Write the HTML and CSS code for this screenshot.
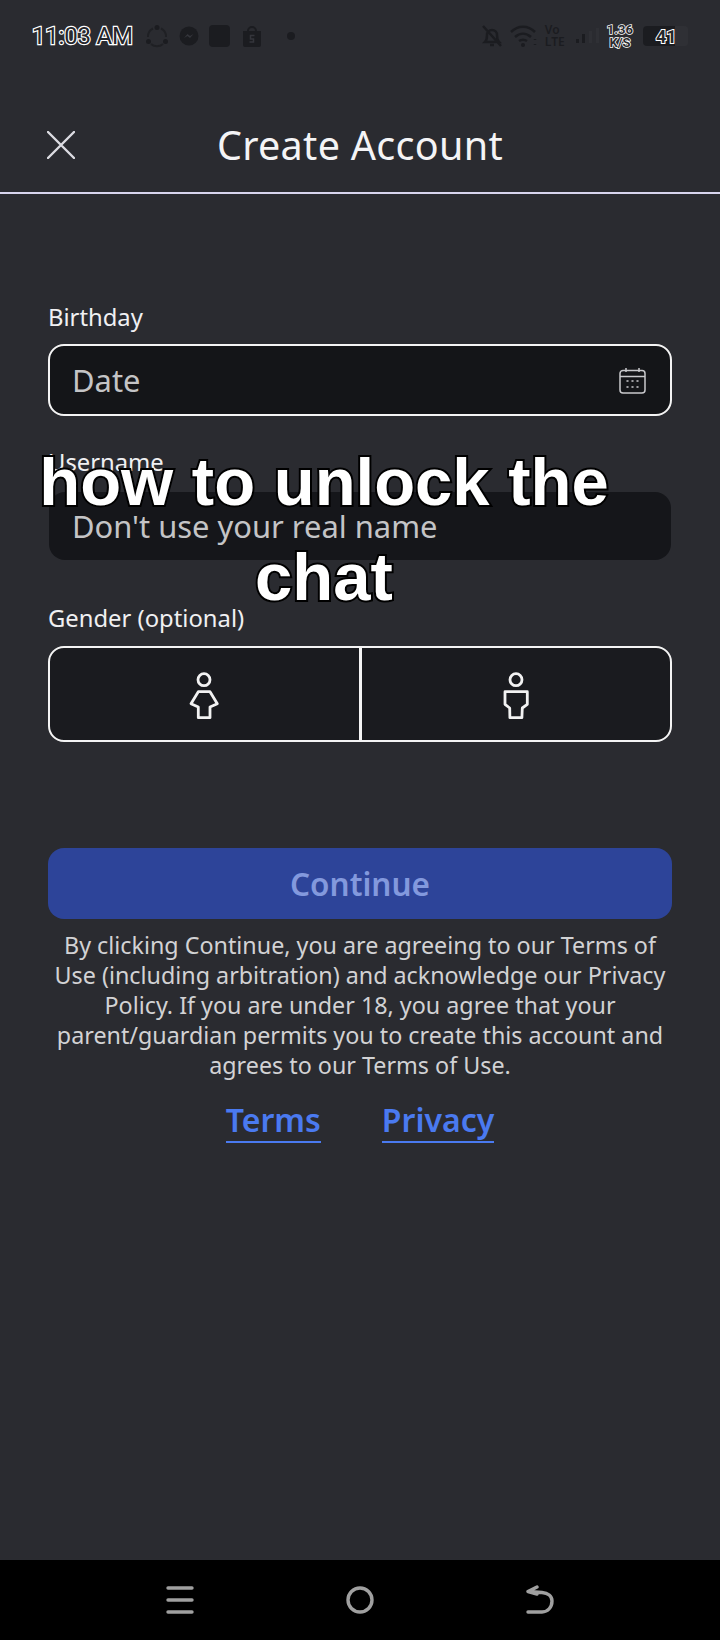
FILE: index.html
```html
<!DOCTYPE html>
<html lang="en">
<head>
<meta charset="utf-8">
<title>Create Account</title>
<link rel="stylesheet" href="styles.css">
</head>
<body>
<div class="app">
  <div class="status">
    <div class="status-left">
      <span class="time">11:03 AM</span>
      <svg class="si" width="24" height="24" viewBox="0 0 24 24" fill="none" stroke="#1f2024" stroke-width="2"><path d="M8 4.500A9 9 0 0 0 3 13M21 13a9 9 0 0 0-5-8.500M6 20a9 9 0 0 0 12 0"/><circle cx="12" cy="3.500" r="2.500" fill="#1b1c20" stroke="none"/><circle cx="3.500" cy="17.500" r="2.500" fill="#1b1c20" stroke="none"/><circle cx="20.500" cy="17.500" r="2.500" fill="#1b1c20" stroke="none"/></svg>
      <svg class="si" width="20" height="20" viewBox="0 0 20 20"><circle cx="10" cy="10" r="9.500" fill="#1b1c20"/><path d="M5 12l3.500-4 2.500 2 3.500-2-3.500 4-2.500-2z" fill="#34353b"/></svg>
      <span class="app-square"></span>
      <svg class="si" width="18" height="22" viewBox="0 0 18 22"><path d="M0 6h18v14a2 2 0 0 1-2 2H2a2 2 0 0 1-2-2z" fill="#1b1c20"/><path d="M5 6a4 4 0 0 1 8 0" fill="none" stroke="#1b1c20" stroke-width="2"/><path d="M11.500 10.500H7.500v3.500h3v3h-4" fill="none" stroke="#34353b" stroke-width="1.500"/></svg>
      <span class="dot"></span>
    </div>
    <div class="status-right">
      <svg width="22" height="24" viewBox="0 0 22 24" fill="none" stroke="#1b1c20" stroke-width="2.500"><path d="M4 18c2-2 2-4 2-7a5 5 0 0 1 10 0c0 3 0 5 2 7zM9 21h4M2 2l18 20"/></svg>
      <svg width="28" height="22" viewBox="0 0 28 22" fill="none" stroke="#1b1c20" stroke-width="2.500"><path d="M1 7c7-7 17-7 24 0M5 12c5-4.500 11-4.500 16 0M9 16c3-2 5-2 8 0"/><circle cx="13" cy="20" r="2" fill="#1b1c20" stroke="none"/><path d="M25 14v1M25 19v1"/></svg>
      <span class="volte">Vo<br>LTE</span>
      <svg width="24" height="16" viewBox="0 0 24 16"><rect x="0" y="11" width="3" height="4" fill="#1b1c20"/><rect x="6" y="6" width="3" height="9" fill="#1b1c20"/><rect x="13" y="3" width="3" height="12" fill="#2f3035"/><rect x="20" y="0" width="3" height="15" fill="#2f3035"/></svg>
      <span class="speed">1.36<br>K/S</span>
      <div class="battery"><span class="battery-num">41</span></div>
    </div>
  </div>

  <header class="header">
    <svg class="close" width="28" height="28" viewBox="0 0 28 28" fill="none" stroke="#dcdce2" stroke-width="2.400" stroke-linecap="round"><path d="M1 1l26 26M27 1L1 27"/></svg>
    <h1 class="title">Create Account</h1>
  </header>

  <main class="main">
    <label class="label label-birthday">Birthday</label>
    <div class="field field-date">
      <span class="placeholder">Date</span>
      <svg width="27" height="27" viewBox="0 0 27 27" fill="none" stroke="#c9c9cc" stroke-width="1.500"><rect x="1" y="3.500" width="25" height="22.500" rx="3"/><path d="M1 9.500h25M7 1v4M20 1v4"/><path d="M8 14h1M13 14h1M18 14h1M8 20h1M13 20h1M18 20h1" stroke-linecap="round"/></svg>
    </div>

    <label class="label label-username">Username</label>
    <div class="field field-name">
      <span class="placeholder">Don't use your real name</span>
    </div>

    <label class="label label-gender">Gender (optional)</label>
    <div class="gender">
      <div class="gender-opt">
        <svg width="32" height="50" viewBox="0 0 32 50" fill="none" stroke="#f2f2f2" stroke-width="2.800" stroke-linejoin="round"><circle cx="16" cy="8.700" r="6"/><path d="M10.300 20.700H22L29.300 32.700 22 36V46.700H10.300V36L3 32.700z"/></svg>
      </div>
      <div class="gender-opt gender-opt-right">
        <svg width="32" height="50" viewBox="0 0 32 50" fill="none" stroke="#f2f2f2" stroke-width="2.800" stroke-linejoin="round"><circle cx="16" cy="8.700" r="6"/><path d="M5 20.700H27.300V33.300L22.300 37 21.900 46.700H9.900L9.700 37 5 33.300z"/></svg>
      </div>
    </div>

    <button class="continue" type="button">Continue</button>

    <p class="legal">By clicking Continue, you are agreeing to our Terms of Use (including arbitration) and acknowledge our Privacy Policy. If you are under 18, you agree that your parent/guardian permits you to create this account and agrees to our Terms of Use.</p>

    <div class="links">
      <a class="link">Terms</a>
      <a class="link">Privacy</a>
    </div>
  </main>

  <nav class="nav">
    <svg width="28" height="28" viewBox="0 0 28 28" stroke="#a0a0a0" stroke-width="3.400" stroke-linecap="round"><path d="M2 2h24M2 14h24M2 26h24"/></svg>
    <svg width="30" height="30" viewBox="0 0 30 30" fill="none" stroke="#a0a0a0" stroke-width="3.400"><circle cx="15" cy="15" r="12"/></svg>
    <svg width="30" height="30" viewBox="0 0 30 30" fill="none" stroke="#a0a0a0" stroke-width="3.400" stroke-linecap="round" stroke-linejoin="round"><path d="M12 2L3 6.500 12 9M3 6.500L17 7.500C23 8 27 11 27 16 27 22 23 27 17 27H3"/></svg>
  </nav>

  <div class="caption">how to unlock the<br>chat</div>
</div>
</body>
</html>
```

FILE: styles.css
```css
* { box-sizing: border-box; }
html, body { margin: 0; padding: 0; }
body { background: #2a2b30; font-family: "Noto Sans", sans-serif; }
.app { position: relative; width: 720px; height: 1640px; display: flex; flex-direction: column; background: #2a2b30; overflow: hidden; }

.status { height: 72px; padding: 0 32px; display: flex; justify-content: space-between; align-items: center; }
.status-left { display: flex; align-items: center; }
.time { font-family: "Roboto", sans-serif; font-size: 24px; letter-spacing: -0.2px; color: #26272b; -webkit-text-stroke: 2.400px #fff; paint-order: stroke fill; margin-right: 12px; }
.si { margin-right: 10px; flex: none; }
.app-square { width: 21px; height: 22px; border-radius: 4px; background: #1b1c20; margin-right: 13px; }
.dot { width: 8px; height: 8px; border-radius: 50%; background: #1b1c20; margin-left: 16px; }
.status-right { display: flex; align-items: center; gap: 7px; }
.volte { font-size: 12px; line-height: 12px; color: #1b1c20; font-weight: 600; width: 24px; }
.speed { font-family: "Roboto", sans-serif; font-size: 13px; line-height: 13px; font-weight: 700; color: #2a2b30; -webkit-text-stroke: 1.500px #fff; paint-order: stroke fill; text-align: center; }
.battery { width: 45px; height: 20px; margin-left: 3px; border-radius: 4px; background: linear-gradient(90deg, #1b1c20 72%, #2f3035 72%); display: flex; align-items: center; padding-left: 13px; }
.battery-num { font-family: "Roboto", sans-serif; font-size: 18px; font-weight: 700; color: #26272b; -webkit-text-stroke: 2px #fff; paint-order: stroke fill; }

.header { position: relative; height: 122px; border-bottom: 2px solid #d8d5ee; display: flex; align-items: center; justify-content: center; padding-top: 26px; }
.close { position: absolute; left: 47px; top: 59px; }
.title { margin: 0; font-size: 39.500px; font-weight: 400; color: #f4f4f6; letter-spacing: 0.3px; }

.main { flex: 1; padding: 107px 48px 0; display: flex; flex-direction: column; }
.label { font-size: 23.800px; line-height: 32px; color: #f0f0f2; }
.field { height: 72px; border-radius: 16px; background: #141518; display: flex; align-items: center; justify-content: space-between; padding: 0 24px; margin-top: 11px; }
.field-date { border: 2px solid #f4f4f4; padding: 0 24px 0 22px; }
.field-name { height: 68px; margin-top: 14px; margin-left: 1px; margin-right: 1px; padding-left: 23px; background: #15161a; }
.placeholder { font-size: 30.900px; color: #c4c4c6; }
.label-username { margin-top: 30px; }
.label-gender { margin-top: 42px; }
.gender { height: 96px; margin-top: 12px; border: 2px solid #f4f4f4; border-radius: 16px; background: #1a1b1f; display: flex; overflow: hidden; }
.gender-opt { flex: 1; display: flex; align-items: center; justify-content: center; padding-top: 3px; }
.gender-opt-right { border-left: 3px solid #f4f4f4; }

.continue { height: 71px; margin-top: 106px; border: 0; border-radius: 16px; background: #2d4499; color: #8399dd; font-family: inherit; font-size: 31.500px; font-weight: 600; }
.legal { margin: 11px -4px 0; font-size: 23.300px; line-height: 30px; color: #d2d2d4; text-align: center; }
.links { display: flex; justify-content: center; gap: 61px; margin-top: 19px; }
.link { font-size: 32px; font-weight: 600; line-height: 42px; color: #4a7af0; border-bottom: 2px solid #4a7af0; }

.nav { height: 80px; background: #000; display: grid; grid-template-columns: repeat(3, 180px); justify-content: center; justify-items: center; align-items: center; }

.caption { position: absolute; left: 0; top: 434px; width: 648px; text-align: center; font-family: "Liberation Sans", sans-serif; font-weight: 700; font-size: 67px; line-height: 95px; color: #fff; -webkit-text-stroke: 4px #000; paint-order: stroke fill; }
```
